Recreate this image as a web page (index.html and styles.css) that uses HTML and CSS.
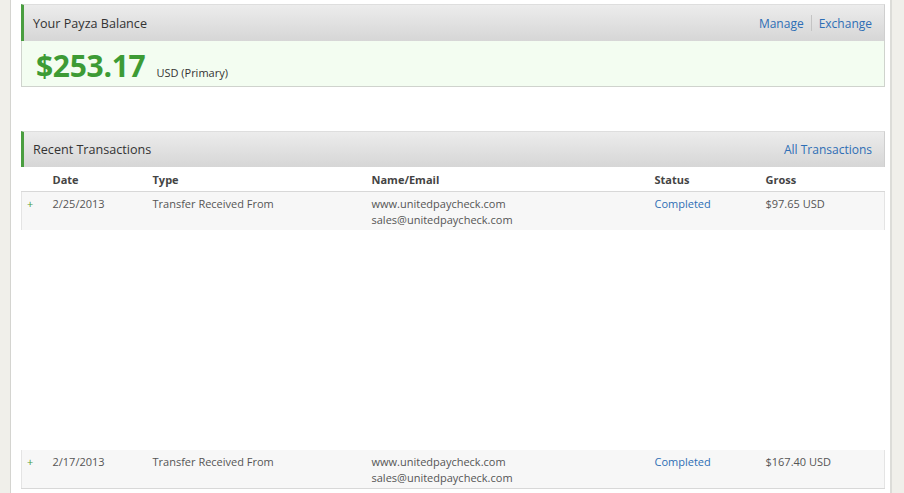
FILE: index.html
```html
<!DOCTYPE html>
<html>
<head>
<meta charset="utf-8">
<link rel="stylesheet" href="styles.css">
</head>
<body>
<div class="page">
  <section class="panel balance">
    <div class="panel-head">
      <h2>Your Payza Balance</h2>
      <div class="links"><a>Manage</a><span class="sep"></span><a>Exchange</a></div>
    </div>
    <div class="balance-body">
      <span class="amount">$253.17</span><span class="cur">USD (Primary)</span>
    </div>
  </section>

  <section class="panel trans">
    <div class="panel-head">
      <h2>Recent Transactions</h2>
      <div class="links"><a>All Transactions</a></div>
    </div>
    <table class="tx">
      <thead>
        <tr><th class="c-plus"></th><th class="c-date">Date</th><th class="c-type">Type</th><th class="c-name">Name/Email</th><th class="c-status">Status</th><th class="c-gross">Gross</th></tr>
      </thead>
      <tbody>
        <tr class="row">
          <td class="plus">+</td><td>2/25/2013</td><td>Transfer Received From</td><td>www.unitedpaycheck.com<br>sales@unitedpaycheck.com</td><td><a>Completed</a></td><td>$97.65 USD</td>
        </tr>
        <tr class="detail"><td colspan="6"></td></tr>
        <tr class="row last">
          <td class="plus">+</td><td>2/17/2013</td><td>Transfer Received From</td><td>www.unitedpaycheck.com<br>sales@unitedpaycheck.com</td><td><a>Completed</a></td><td>$167.40 USD</td>
        </tr>
      </tbody>
    </table>
  </section>
</div>
</body>
</html>
```
FILE: styles.css
```css
html, body {
  margin: 0;
  padding: 0;
}
body {
  background: #f0efea;
  font-family: "Open Sans", "Liberation Sans", sans-serif;
  color: #444;
  height: 493px;
  overflow: hidden;
}
.page {
  margin-left: 10px;
  width: 869px;
  min-height: 600px;
  background: #fff;
  border-left: 1px solid #d4d4d0;
  border-right: 2px solid #dcdcd8;
  padding: 4px 0 0 10px;
}
.panel {
  width: 864px;
}
.panel-head {
  display: flex;
  align-items: center;
  justify-content: space-between;
  box-sizing: border-box;
  height: 37px;
  background: linear-gradient(#ececec, #d6d6d6);
  border-left: 3px solid #4a9e40;
  border-top: 1px solid #dedede;
  border-right: 1px solid #cfcfcf;
  padding: 0 12px 0 9px;
}
.trans .panel-head {
  height: 36px;
}
.panel-head h2 {
  margin: 0;
  font-size: 12.6px;
  font-weight: normal;
  color: #333;
}
.links {
  display: flex;
  align-items: center;
  font-size: 12px;
}
.links a {
  color: #2e6eb5;
}
.sep {
  width: 1px;
  height: 16px;
  background: #c4c4c4;
  margin: 0 7px;
}
.balance-body {
  height: 46px;
  box-sizing: border-box;
  background: #f3fdf1;
  border: 1px solid #cfd3cd;
  border-top: none;
  padding: 4px 0 0 14px;
  display: flex;
  align-items: baseline;
}
.amount {
  font-size: 30px;
  font-weight: bold;
  color: #3d9b35;
  letter-spacing: -0.3px;
}
.cur {
  font-size: 11px;
  color: #333;
  margin-left: 11px;
}
.trans {
  margin-top: 44px;
}
.tx {
  width: 864px;
  border-collapse: collapse;
  font-size: 11px;
  table-layout: fixed;
}
.tx th {
  text-align: left;
  font-weight: bold;
  color: #444;
  height: 24px;
  padding: 0;
  border-bottom: 1px solid #d8d8d8;
  vertical-align: middle;
}
.c-plus { width: 31px; }
.c-date { width: 100px; }
.c-type { width: 219px; }
.c-name { width: 283px; }
.c-status { width: 111px; }
.tx td {
  padding: 4px 0 0 0;
  vertical-align: top;
  line-height: 16px;
  color: #555;
}
.tx .row td {
  background: #f7f7f7;
  height: 34px;
}
.tx .row td:first-child {
  border-left: 1px solid #e4e4e4;
}
.tx .row td:last-child {
  border-right: 1px solid #e4e4e4;
}
.tx .row.last td {
  border-bottom: 1px solid #d8d8d8;
}
.tx td.plus {
  color: #4a9e40;
  padding-left: 5px;
}
.tx td a {
  color: #2e6eb5;
}
.tx .detail td {
  height: 220px;
  padding: 0;
  background: #fff;
}
```
